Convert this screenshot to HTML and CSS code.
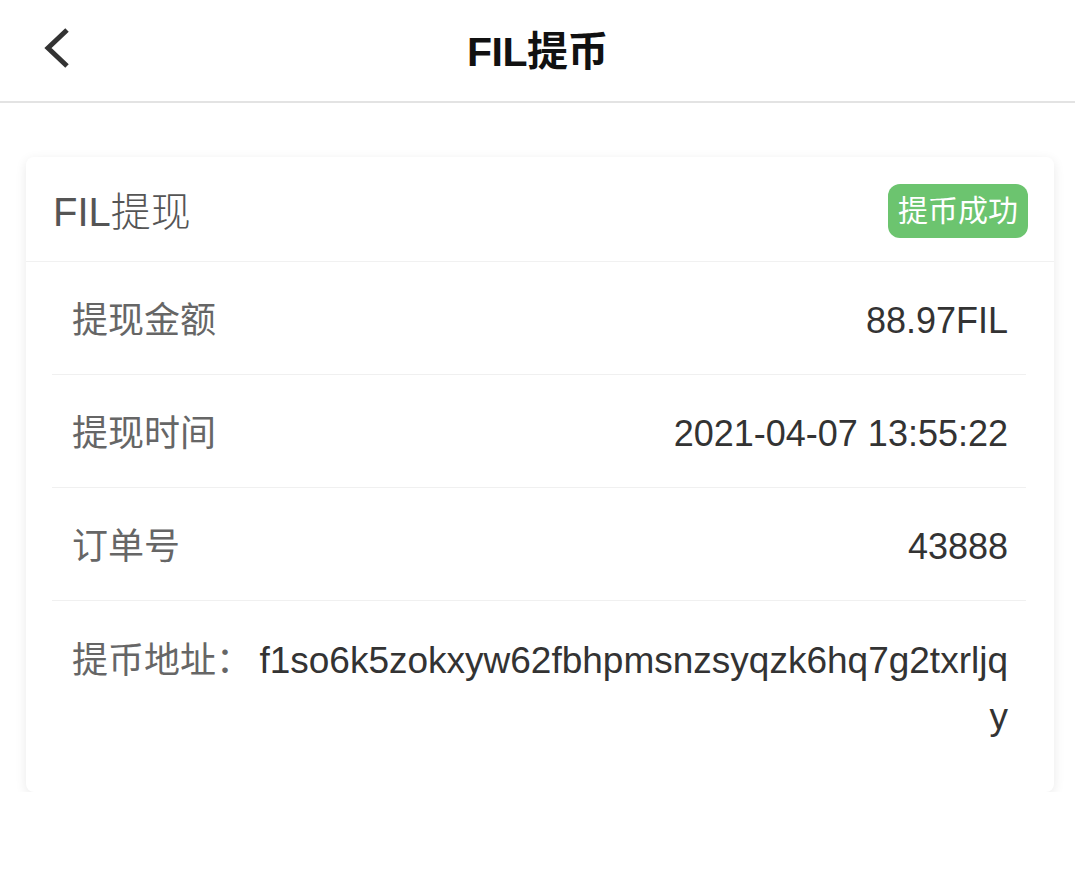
FILE: index.html
```html
<!DOCTYPE html>
<html lang="zh-CN">
<head>
    <meta charset="UTF-8">
    <meta name="viewport" content="width=device-width, initial-scale=1.0">
    <title>FIL提币</title>
    <link rel="stylesheet" href="styles.css">
</head>
<body>

    <div class="nav-bar">
        <a class="back" href="#">
            <svg width="30" height="44" viewBox="0 0 30 44">
                <polyline points="24,4 5,22 24,40" fill="none" stroke="#333" stroke-width="5"/>
            </svg>
        </a>
        <h1>FIL提币</h1>
        <span></span>
    </div>

    <div class="card">
        <div class="card-head">
            <span class="card-title">FIL提现</span>
            <span class="badge">提币成功</span>
        </div>

        <div class="row">
            <span class="label">提现金额</span>
            <span class="value">88.97FIL</span>
        </div>
        <div class="row">
            <span class="label">提现时间</span>
            <span class="value">2021-04-07 13:55:22</span>
        </div>
        <div class="row">
            <span class="label">订单号</span>
            <span class="value">43888</span>
        </div>
        <div class="row address">
            <span class="label">提币地址：</span>
            <span class="value">f1so6k5zokxyw62fbhpmsnzsyqzk6hq7g2txrljqy</span>
        </div>
    </div>

</body>
</html>
```

FILE: styles.css
```css
body {
    margin: 0;
    background: #fff;
    font-family: "Liberation Sans", "Noto Sans CJK SC", sans-serif;
    color: #333;
}
.nav-bar {
    height: 101px;
    display: grid;
    grid-template-columns: 1fr auto 1fr;
    align-items: center;
    border-bottom: 2px solid #e3e3e3;
}
.back {
    display: flex;
    align-items: center;
    padding-left: 43px;
    padding-bottom: 6px;
}
.nav-bar h1 {
    margin: 0;
    padding-bottom: 6px;
    font-size: 41px;
    font-weight: bold;
    color: #111;
    letter-spacing: -0.5px;
    font-family: "Liberation Sans", "Noto Sans CJK SC", sans-serif;
}
.card {
    margin: 54px 21px 0 26px;
    background: #fff;
    border-radius: 8px;
    box-shadow: 0 3px 12px rgba(0, 0, 0, 0.09);
    padding-bottom: 16px;
}
.card-head {
    height: 104px;
    display: flex;
    align-items: center;
    justify-content: space-between;
    padding: 0 26px 0 27px;
    border-bottom: 1px solid #f1f1f1;
}
.card-title {
    font-size: 40px;
    color: #555;
    font-weight: 300;
}
.badge {
    background: #6cc46f;
    color: #fff;
    font-size: 30px;
    line-height: 54px;
    padding: 0 10px;
    border-radius: 12px;
    margin-top: 4px;
}
.row {
    margin: 0 28px 0 26px;
    padding: 35px 18px 29px 20px;
    display: flex;
    justify-content: space-between;
    line-height: 48px;
    border-bottom: 1px solid #f0f0f0;
}
.row:last-child {
    border-bottom: none;
}
.label {
    font-size: 36px;
    color: #666;
    white-space: nowrap;
}
.value {
    font-size: 36px;
    color: #333;
}
.address {
    line-height: 56px;
    padding-top: 32px;
    padding-bottom: 31px;
}
.address .label {
    margin-right: 4px;
}
.address .value {
    font-size: 37px;
    text-align: right;
    word-break: break-all;
}
```
